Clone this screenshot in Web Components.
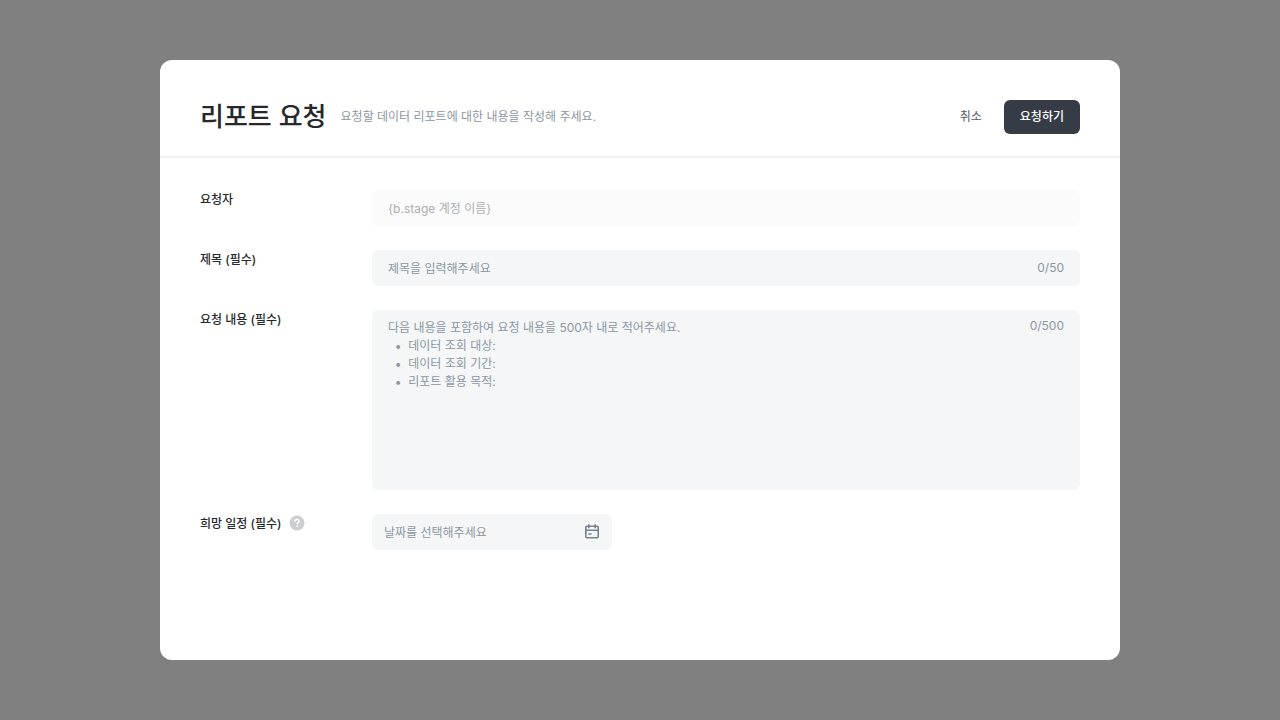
<!DOCTYPE html>
<html lang="ko">
<head>
<meta charset="utf-8">
<meta name="viewport" content="width=device-width, initial-scale=1">
<title>리포트 요청</title>
<style>
    body {
        margin: 0;
        min-height: 100vh;
        display: grid;
        align-items: center;
        background-color: #808080;
        font-family: Inter, "Noto Sans CJK KR", sans-serif;
        font-size: 12px;
        line-height: 18px;
        color: #27282c;
        --muted: #8c96a1;
        --field: #f4f6f8;
        --dark: #353c45;
    }
</style>
</head>
<body>
<request-dialog heading="리포트 요청" description="요청할 데이터 리포트에 대한 내용을 작성해 주세요.">
    <action-button slot="actions" kind="text">취소</action-button>
    <action-button slot="actions" kind="primary">요청하기</action-button>
    <text-field label="요청자" value="{b.stage 계정 이름}" disabled></text-field>
    <text-field label="제목 (필수)" placeholder="제목을 입력해주세요" max="50"></text-field>
    <text-area-field label="요청 내용 (필수)" max="500"
        placeholder="다음 내용을 포함하여 요청 내용을 500자 내로 적어주세요.&#10;  •  데이터 조회 대상:&#10;  •  데이터 조회 기간:&#10;  •  리포트 활용 목적:"></text-area-field>
    <date-field label="희망 일정 (필수)" placeholder="날짜를 선택해주세요">
        <help-icon slot="help"></help-icon>
    </date-field>
</request-dialog>

<script>
/**
 * Dialog with a header, actions and a column of fields
 */
class RequestDialog extends HTMLElement {
    connectedCallback() {
        this.root = this.attachShadow({mode: 'open'});
        this.root.innerHTML = `<style>${this.styles}</style>${this.template}`;
    }

    get styles() {
        return `
            :host {
                display: block;
                box-sizing: border-box;
                width: 75%;
                min-height: 600px;
                margin: 0 auto;
                border-radius: 12px;
                background-color: #FFF;
            }
            header {
                display: flex;
                align-items: center;
                gap: 14px;
                padding: 40px 40px 22px;
                border-bottom: 2px solid #F2F2F3;
            }
            h1 {
                margin: 0;
                font-size: 26px;
                line-height: 34px;
                font-weight: 500;
            }
            p {
                flex: 1;
                margin: 0;
                color: var(--muted);
            }
            .actions {
                display: flex;
                gap: 6px;
            }
            .fields {
                display: flex;
                flex-direction: column;
                gap: 24px;
                padding: 32px 40px;
            }
        `;
    }

    get template() {
        return `
            <header>
                <h1>${this.getAttribute('heading')}</h1>
                <p>${this.getAttribute('description')}</p>
                <div class='actions'><slot name='actions'></slot></div>
            </header>
            <div class='fields'><slot></slot></div>
        `;
    }
}
customElements.define('request-dialog', RequestDialog);

/**
 * Button, either filled or plain text
 */
class ActionButton extends HTMLElement {
    connectedCallback() {
        this.root = this.attachShadow({mode: 'open'});
        this.root.innerHTML = `
            <style>
                :host {
                    display: block;
                }
                button {
                    padding: 8px 16px;
                    border: none;
                    border-radius: 6px;
                    background: none;
                    font: inherit;
                    color: #555B63;
                    cursor: pointer;
                }
                .primary {
                    background-color: var(--dark);
                    color: #FFF;
                    font-weight: 500;
                }
            </style>
            <button type='button' class='${this.getAttribute('kind')}'><slot></slot></button>
        `;
    }
}
customElements.define('action-button', ActionButton);

/**
 * Base for a label with a control beside it
 */
class FormField extends HTMLElement {
    connectedCallback() {
        this.label = this.getAttribute('label');
        this.placeholder = this.getAttribute('placeholder') || '';
        this.value = this.getAttribute('value') || '';
        this.max = this.getAttribute('max');

        this.root = this.attachShadow({mode: 'open'});
        this.root.innerHTML = `
            <style>${this.baseStyle}${this.extraStyle}</style>
            <div class='label'>
                <label for='control'>${this.label}</label>
                <slot name='help'></slot>
            </div>
            <div class='box'>${this.control}${this.counter}</div>
        `;
        this._hookEvents();
    }

    get baseStyle() {
        return `
            :host {
                display: grid;
                grid-template-columns: 172px 1fr;
                align-items: start;
            }
            .label {
                display: flex;
                align-items: start;
                gap: 7px;
                font-weight: 500;
                line-height: 20px;
            }
            .box {
                display: flex;
                align-items: center;
                box-sizing: border-box;
                min-height: 36px;
                padding: 0 16px;
                border-radius: 6px;
                background-color: var(--field);
                color: var(--muted);
            }
            input, textarea {
                flex: 1;
                min-width: 0;
                height: 18px;
                padding: 1px 0 0;
                border: none;
                outline: none;
                background: none;
                font: inherit;
                color: #27282C;
            }
            ::placeholder {
                color: var(--muted);
                opacity: 1;
            }
        `;
    }

    get extraStyle() {
        return '';
    }

    get counter() {
        return this.max ? `<span class='counter'>0/${this.max}</span>` : '';
    }

    /**
     * Keep the counter up to date while typing
     */
    _hookEvents() {
        const control = this.root.querySelector('#control');
        const counter = this.root.querySelector('.counter');
        if (!counter) return;
        control.addEventListener('input', () => {
            counter.textContent = `${control.value.length}/${this.max}`;
        });
    }
}

class TextField extends FormField {
    get extraStyle() {
        return `
            :host([disabled]) .box {
                background-color: #FBFBFB;
            }
            input:disabled {
                color: #ADAEB0;
            }
        `;
    }

    get control() {
        const disabled = this.hasAttribute('disabled') ? 'disabled' : '';
        const max = this.max ? `maxlength='${this.max}'` : '';
        return `<input id='control' type='text' value='${this.value}' placeholder='${this.placeholder}' ${max} ${disabled}>`;
    }
}
customElements.define('text-field', TextField);

class TextAreaField extends FormField {
    get extraStyle() {
        return `
            .box {
                align-items: start;
                padding: 7px 16px 8px;
            }
            textarea {
                height: 162px;
                padding: 2px 0 1px;
                resize: none;
            }
        `;
    }

    get control() {
        return `<textarea id='control' maxlength='${this.max}' placeholder='${this.placeholder}'></textarea>`;
    }
}
customElements.define('text-area-field', TextAreaField);

class DateField extends FormField {
    get extraStyle() {
        return `
            .box {
                width: 240px;
                padding: 0 12px;
            }
            button {
                display: flex;
                padding: 0;
                border: none;
                background: none;
                cursor: pointer;
            }
        `;
    }

    get control() {
        return `
            <input id='control' type='text' placeholder='${this.placeholder}'>
            <button type='button' aria-label='달력 열기'>
                <svg width='16' height='16' viewBox='0 0 16 16' fill='none' stroke='#78828E' stroke-width='1.6'>
                    <rect x='1.8' y='2.3' width='12.4' height='11.5' rx='1'/>
                    <path d='M1.8 6.3H14.2M4.8 0.2V4.2M11.2 0.2V4.2M4.4 10H7.6'/>
                </svg>
            </button>
        `;
    }
}
customElements.define('date-field', DateField);

/**
 * Round question mark beside a label
 */
class HelpIcon extends HTMLElement {
    connectedCallback() {
        this.root = this.attachShadow({mode: 'open'});
        this.root.innerHTML = `
            <style>
                :host {
                    display: flex;
                    padding-top: 1px;
                }
            </style>
            <svg width='16' height='16' viewBox='0 0 16 16' fill='none'>
                <circle cx='8' cy='8' r='7.5' fill='#CBCED3'/>
                <path d='M5.9 6.5C5.9 5.2 6.8 4.5 8 4.5S10.1 5.2 10.1 6.3C10.1 7.6 8 7.7 8 9.2' stroke='#FFF' stroke-width='1.5'/>
                <circle cx='8' cy='11.2' r='0.9' fill='#FFF'/>
            </svg>
        `;
    }
}
customElements.define('help-icon', HelpIcon);
</script>
</body>
</html>
